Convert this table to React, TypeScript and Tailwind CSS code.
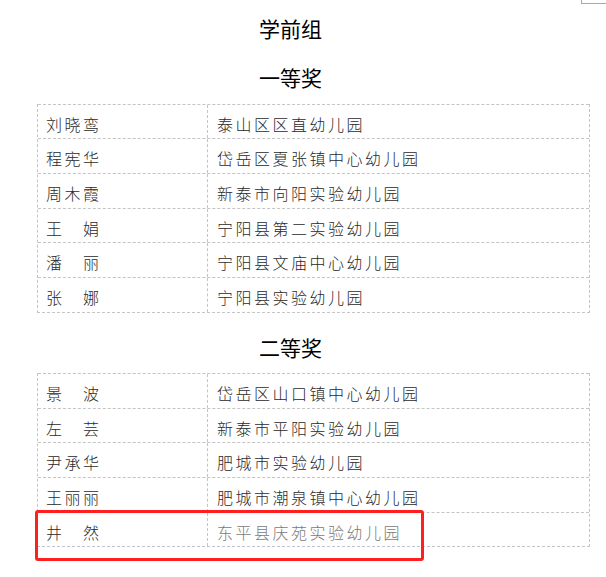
import React from "react";

type Row = { name: string; school: string; faded?: boolean; h: number };

const first: Row[] = [
  { name: "刘晓鸾", school: "泰山区区直幼儿园", h: 34 },
  { name: "程宪华", school: "岱岳区夏张镇中心幼儿园", h: 35 },
  { name: "周木霞", school: "新泰市向阳实验幼儿园", h: 35 },
  { name: "王　娟", school: "宁阳县第二实验幼儿园", h: 34 },
  { name: "潘　丽", school: "宁阳县文庙中心幼儿园", h: 35 },
  { name: "张　娜", school: "宁阳县实验幼儿园", h: 35 },
];

const second: Row[] = [
  { name: "景　波", school: "岱岳区山口镇中心幼儿园", h: 35 },
  { name: "左　芸", school: "新泰市平阳实验幼儿园", h: 34 },
  { name: "尹承华", school: "肥城市实验幼儿园", h: 35 },
  { name: "王丽丽", school: "肥城市潮泉镇中心幼儿园", h: 35 },
  { name: "井　然", school: "东平县庆苑实验幼儿园", h: 34, faded: true },
];

const font = {
  fontFamily: '"Noto Sans CJK SC", "Noto Sans", sans-serif',
};

function Table({ rows }: { rows: Row[] }) {
  return (
    <div className="ml-[37px] w-[553px] border-x border-b border-dashed border-[#c4c4c4]">
      {rows.map((r, i) => (
        <div
          key={i}
          style={{ height: r.h }}
          className="flex border-t border-dashed border-[#c4c4c4] text-[16px] tracking-[2.5px] text-[#2a2a2a] font-light leading-none"
        >
          <div className="w-[170px] shrink-0 border-r border-dashed border-[#c4c4c4] pl-[8px] pt-[4px] flex items-center">
            <span>{r.name}</span>
          </div>
          <div className="flex-1 pl-[9px] pt-[4px] flex items-center">
            <span className={r.faded ? "text-[#7a7a7a]" : ""}>{r.school}</span>
          </div>
        </div>
      ))}
    </div>
  );
}

function Title({ text, className }: { text: string; className: string }) {
  return (
    <div
      className={`w-[581px] h-[24px] text-center text-[21px] leading-[24px] font-normal text-black ${className}`}
    >
      {text}
    </div>
  );
}

export default function App() {
  return (
    <div className="relative w-[606px] h-[577px] bg-white overflow-hidden" style={font}>
      <div className="absolute top-0 left-[581px] w-[25px] h-[4px] border-l border-b border-[#a8a8a8]" />
      <Title text="学前组" className="mt-[16px]" />
      <Title text="一等奖" className="mt-[25px]" />
      <div className="mt-[15px]">
        <Table rows={first} />
      </div>
      <Title text="二等奖" className="mt-[22px]" />
      <div className="mt-[14px]">
        <Table rows={second} />
      </div>
      <div className="absolute left-[35px] top-[510px] w-[389px] h-[51px] border-[3px] border-[#ff1f1f] rounded-[3px]" />
    </div>
  );
}
